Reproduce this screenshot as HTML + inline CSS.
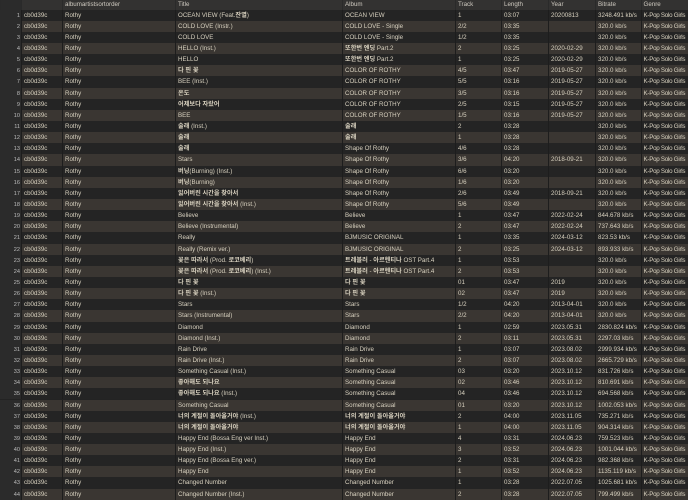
<!DOCTYPE html>
<html><head><meta charset="utf-8"><style>
html,body{margin:0;padding:0;width:688px;height:500px;overflow:hidden;background:#232323;}
body{font-family:"Liberation Sans","Noto Sans CJK KR",sans-serif;font-size:6.2px;color:#d8d1bf;}
.r{position:absolute;left:0;width:688px;height:11.14px;}
.r.o{background:#242424}
.r.e{background:#3a3632}
.c{position:absolute;top:0;height:100%;line-height:11.14px;white-space:nowrap;overflow:hidden;box-sizing:border-box;border-left:1px solid #1d1d1d;padding-left:2px}
.h{position:absolute;left:0;top:0;width:688px;height:9.6px;background:#333231;}
.h .c{line-height:9.6px;color:#cfcac0;border-left:1px solid #2a2a2a}
.i{left:0;width:21px;border-left:none;text-align:right;padding-right:1px;padding-left:0;background:#2b2b2b;font-size:5.6px;color:#bbb;line-height:12.5px!important}
.c1{left:21px;width:41px}.c2{left:62px;width:113px}.c3{left:175px;width:167px}.c4{left:342px;width:113px}
.c5{left:455px;width:46px}.c6{left:501px;width:47px}.c7{left:548px;width:47px}.c8{left:595px;width:46px}.c9{left:641px;width:47px;padding-left:1.5px;letter-spacing:-0.25px}
.k{font-weight:bold}
</style></head><body>
<div class="h"><div class="c i"></div><div class="c c1"></div><div class="c c2">albumartistsortorder</div><div class="c c3">Title</div><div class="c c4">Album</div><div class="c c5">Track</div><div class="c c6">Length</div><div class="c c7">Year</div><div class="c c8">Bitrate</div><div class="c c9" style="letter-spacing:0">Genre</div></div>
<div id="t"></div>
<script>
var d=[
["OCEAN VIEW (Feat.잔열)","OCEAN VIEW","1","03:07","20200813","3248.491 kb/s"],
["COLD LOVE (Instr.)","COLD LOVE - Single","2/2","03:35","","320.0 kb/s"],
["COLD LOVE","COLD LOVE - Single","1/2","03:35","","320.0 kb/s"],
["HELLO (Inst.)","또한번 엔딩 Part.2","2","03:25","2020-02-29","320.0 kb/s"],
["HELLO","또한번 엔딩 Part.2","1","03:25","2020-02-29","320.0 kb/s"],
["다 핀 꽃","COLOR OF ROTHY","4/5","03:47","2019-05-27","320.0 kb/s"],
["BEE (Inst.)","COLOR OF ROTHY","5/5","03:16","2019-05-27","320.0 kb/s"],
["온도","COLOR OF ROTHY","3/5","03:16","2019-05-27","320.0 kb/s"],
["어제보다 자랐어","COLOR OF ROTHY","2/5","03:15","2019-05-27","320.0 kb/s"],
["BEE","COLOR OF ROTHY","1/5","03:16","2019-05-27","320.0 kb/s"],
["술래 (Inst.)","술래","2","03:28","","320.0 kb/s"],
["술래","술래","1","03:28","","320.0 kb/s"],
["술래","Shape Of Rothy","4/6","03:28","","320.0 kb/s"],
["Stars","Shape Of Rothy","3/6","04:20","2018-09-21","320.0 kb/s"],
["버닝(Burning) (Inst.)","Shape Of Rothy","6/6","03:20","","320.0 kb/s"],
["버닝(Burning)","Shape Of Rothy","1/6","03:20","","320.0 kb/s"],
["잃어버린 시간을 찾아서","Shape Of Rothy","2/6","03:49","2018-09-21","320.0 kb/s"],
["잃어버린 시간을 찾아서 (Inst.)","Shape Of Rothy","5/6","03:49","","320.0 kb/s"],
["Believe","Believe","1","03:47","2022-02-24","844.678 kb/s"],
["Believe (Instrumental)","Believe","2","03:47","2022-02-24","737.643 kb/s"],
["Really","BJMUSIC ORIGINAL","1","03:35","2024-03-12","823.53 kb/s"],
["Really (Remix ver.)","BJMUSIC ORIGINAL","2","03:25","2024-03-12","893.933 kb/s"],
["꽃은 따라서 (Prod. 로코베리)","트레블러 - 아르헨티나 OST Part.4","1","03:53","","320.0 kb/s"],
["꽃은 따라서 (Prod. 로코베리) (Inst.)","트레블러 - 아르헨티나 OST Part.4","2","03:53","","320.0 kb/s"],
["다 핀 꽃","다 핀 꽃","01","03:47","2019","320.0 kb/s"],
["다 핀 꽃 (Inst.)","다 핀 꽃","02","03:47","2019","320.0 kb/s"],
["Stars","Stars","1/2","04:20","2013-04-01","320.0 kb/s"],
["Stars (Instrumental)","Stars","2/2","04:20","2013-04-01","320.0 kb/s"],
["Diamond","Diamond","1","02:59","2023.05.31","2830.824 kb/s"],
["Diamond (Inst.)","Diamond","2","03:11","2023.05.31","2297.03 kb/s"],
["Rain Drive","Rain Drive","1","03:07","2023.08.02","2999.934 kb/s"],
["Rain Drive (Inst.)","Rain Drive","2","03:07","2023.08.02","2665.729 kb/s"],
["Something Casual (Inst.)","Something Casual","03","03:20","2023.10.12","831.726 kb/s"],
["좋아해도 되나요","Something Casual","02","03:46","2023.10.12","810.691 kb/s"],
["좋아해도 되나요 (Inst.)","Something Casual","04","03:46","2023.10.12","694.568 kb/s"],
["Something Casual","Something Casual","01","03:20","2023.10.12","1002.053 kb/s"],
["너의 계절이 돌아올거야 (Inst.)","너의 계절이 돌아올거야","2","04:00","2023.11.05","735.271 kb/s"],
["너의 계절이 돌아올거야","너의 계절이 돌아올거야","1","04:00","2023.11.05","904.314 kb/s"],
["Happy End (Bossa Eng ver Inst.)","Happy End","4","03:31","2024.06.23","759.523 kb/s"],
["Happy End (Inst.)","Happy End","3","03:52","2024.06.23","1001.044 kb/s"],
["Happy End (Bossa Eng ver.)","Happy End","2","03:31","2024.06.23","982.368 kb/s"],
["Happy End","Happy End","1","03:52","2024.06.23","1135.119 kb/s"],
["Changed Number","Changed Number","1","03:28","2022.07.05","1025.681 kb/s"],
["Changed Number (Inst.)","Changed Number","2","03:28","2022.07.05","799.499 kb/s"]];
function b(s){return s.replace(/([\uAC00-\uD7A3][\uAC00-\uD7A3 ]*)/g,'<span class="k">$1</span>');}
var h="";
d.forEach(function(r,k){var y=(9.6+k*11.14).toFixed(2);
h+='<div class="r '+(k%2?'e':'o')+'" style="top:'+y+'px"><div class="c i">'+(k+1)+'</div><div class="c c1">cb0d39c</div><div class="c c2">Rothy</div><div class="c c3">'+b(r[0])+'</div><div class="c c4">'+b(r[1])+'</div><div class="c c5">'+r[2]+'</div><div class="c c6">'+r[3]+'</div><div class="c c7">'+r[4]+'</div><div class="c c8">'+r[5]+'</div><div class="c c9">K-Pop Solo Girls</div></div>';});
document.getElementById("t").innerHTML=h;
</script>
</body></html>
